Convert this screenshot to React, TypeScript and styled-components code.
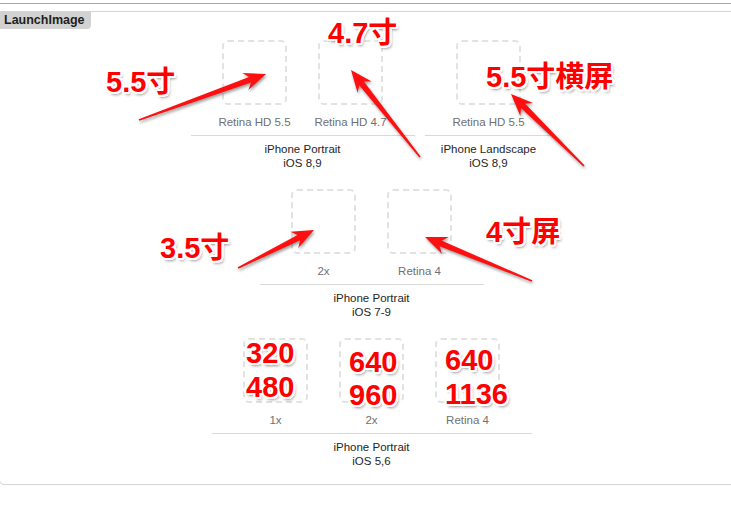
import React from 'react';
import styled, { createGlobalStyle } from 'styled-components';

const GlobalStyle = createGlobalStyle`
  html, body {
    margin: 0;
    padding: 0;
    background: #ffffff;
    overflow: hidden;
  }
  body {
    font-family: "Liberation Sans", Arial, sans-serif;
  }
`;

const Page = styled.div`
  position: relative;
  width: 731px;
  height: 513px;
  overflow: hidden;
`;

const TopRule = styled.div`
  height: 3px;
  border-bottom: 1px solid #a7a7a7;
  margin-bottom: 7px;
`;

const Panel = styled.section`
  box-sizing: border-box;
  width: 745px;
  margin-left: -1px;
  border: 1px solid #d5d5d5;
  border-radius: 0 0 5px 5px;
  display: flex;
  flex-direction: column;
  align-items: flex-start;
  padding-bottom: 16px;
`;

const Tag = styled.div`
  height: 17px;
  line-height: 17px;
  padding: 0 6px 0 4px;
  background: #d2d2d2;
  border-radius: 0 0 4px 0;
  font-size: 12.5px;
  font-weight: 700;
  color: #1e1e1e;
`;

const Rows = styled.div`
  align-self: stretch;
  margin-top: 11px;
  display: flex;
  flex-direction: column;
  gap: 19px;
`;

const Row = styled.div`
  display: flex;
  justify-content: center;
  gap: 10px;
`;

const Group = styled.div<{ $count: number }>`
  width: ${(p) => p.$count * 96 + 32}px;
  display: flex;
  flex-direction: column;
`;

const Cells = styled.div`
  display: flex;
  padding: 0 16px;
`;

const Cell = styled.div`
  width: 96px;
  display: flex;
  flex-direction: column;
  align-items: center;
`;

const Slot = styled.div`
  box-sizing: border-box;
  width: 65px;
  height: 65px;
  border: 2px dashed #e2e2e2;
  border-radius: 6px;
`;

const SlotLabel = styled.div`
  margin-top: 10px;
  font-size: 11.5px;
  line-height: 14px;
  color: #707070;
  white-space: nowrap;
`;

const Rule = styled.div`
  margin-top: 6px;
  height: 1px;
  background: #d9d9d9;
`;

const Title = styled.div`
  padding-top: 6px;
  text-align: center;
  font-size: 11.5px;
  line-height: 14px;
  color: #262626;
`;

const Annot = styled.div<{ $lh?: number }>`
  position: absolute;
  font-family: "Liberation Sans", "Noto Sans CJK SC", Arial, sans-serif;
  font-weight: 700;
  font-size: 29px;
  line-height: ${(p) => p.$lh ?? 29}px;
  color: #ff0000;
  white-space: nowrap;
  text-shadow:
    2px 0 0 #fff, -2px 0 0 #fff, 0 2px 0 #fff, 0 -2px 0 #fff,
    1.5px 1.5px 0 #fff, -1.5px 1.5px 0 #fff, 1.5px -1.5px 0 #fff, -1.5px -1.5px 0 #fff,
    1px 2px 0 #fff, -1px 2px 0 #fff, 1px -2px 0 #fff, -1px -2px 0 #fff,
    2px 1px 0 #fff, -2px 1px 0 #fff, 2px -1px 0 #fff, -2px -1px 0 #fff,
    0 0 3px rgba(0, 0, 0, 0.35),
    2px 3px 3px rgba(0, 0, 0, 0.4);
`;

const ArrowLayer = styled.svg`
  position: absolute;
  left: 0;
  top: 0;
  pointer-events: none;
  filter: drop-shadow(1px 2px 1.5px rgba(0, 0, 0, 0.4));
`;

type GroupData = { labels: string[]; title: string[] };

const rows: GroupData[][] = [
  [
    { labels: ['Retina HD 5.5', 'Retina HD 4.7'], title: ['iPhone Portrait', 'iOS 8,9'] },
    { labels: ['Retina HD 5.5'], title: ['iPhone Landscape', 'iOS 8,9'] },
  ],
  [{ labels: ['2x', 'Retina 4'], title: ['iPhone Portrait', 'iOS 7-9'] }],
  [{ labels: ['1x', '2x', 'Retina 4'], title: ['iPhone Portrait', 'iOS 5,6'] }],
];

type Note = { lines: string[]; x: number; y: number; lh?: number };

const notes: Note[] = [
  { lines: ['5.5寸'], x: 106, y: 68 },
  { lines: ['4.7寸'], x: 328, y: 19 },
  { lines: ['5.5寸横屏'], x: 486, y: 63 },
  { lines: ['3.5寸'], x: 160, y: 234 },
  { lines: ['4寸屏'], x: 486, y: 218 },
  { lines: ['320', '480'], x: 246, y: 336, lh: 34 },
  { lines: ['640', '960'], x: 349, y: 346, lh: 33 },
  { lines: ['640', '1136'], x: 445, y: 343, lh: 34 },
];

type Arrow = { tail: [number, number]; tip: [number, number] };

const arrows: Arrow[] = [
  { tail: [139, 120], tip: [266, 74] },
  { tail: [420, 157], tip: [351, 70] },
  { tail: [584, 166], tip: [511, 94] },
  { tail: [238, 268], tip: [314, 230] },
  { tail: [532, 281], tip: [425, 237] },
];

function arrowPoints({ tail, tip }: Arrow): string {
  const [tx, ty] = tail;
  const [px, py] = tip;
  const dx = px - tx;
  const dy = py - ty;
  const len = Math.hypot(dx, dy);
  const ux = dx / len;
  const uy = dy / len;
  const nx = -uy;
  const ny = ux;
  const headLen = 22;
  const headHalf = 9;
  const neckBack = 17;
  const neckHalf = 3;
  const tailHalf = 0.8;
  const pt = (bx: number, by: number, along: number, side: number) =>
    `${(bx + ux * along + nx * side).toFixed(1)},${(by + uy * along + ny * side).toFixed(1)}`;
  return [
    pt(tx, ty, 0, tailHalf),
    pt(px, py, -neckBack, neckHalf),
    pt(px, py, -headLen, headHalf),
    pt(px, py, 0, 0),
    pt(px, py, -headLen, -headHalf),
    pt(px, py, -neckBack, -neckHalf),
    pt(tx, ty, 0, -tailHalf),
  ].join(' ');
}

export default function App() {
  return (
    <Page>
      <GlobalStyle />
      <TopRule />
      <Panel>
        <Tag>LaunchImage</Tag>
        <Rows>
          {rows.map((row, ri) => (
            <Row key={ri}>
              {row.map((g, gi) => (
                <Group key={gi} $count={g.labels.length}>
                  <Cells>
                    {g.labels.map((l, li) => (
                      <Cell key={li}>
                        <Slot />
                        <SlotLabel>{l}</SlotLabel>
                      </Cell>
                    ))}
                  </Cells>
                  <Rule />
                  <Title>
                    {g.title[0]}
                    <br />
                    {g.title[1]}
                  </Title>
                </Group>
              ))}
            </Row>
          ))}
        </Rows>
      </Panel>
      <ArrowLayer width={731} height={513} viewBox="0 0 731 513">
        {arrows.map((a, i) => (
          <polygon key={i} points={arrowPoints(a)} fill="#ff0f0f" />
        ))}
      </ArrowLayer>
      {notes.map((n, i) => (
        <Annot key={i} $lh={n.lh} style={{ left: n.x, top: n.y }}>
          {n.lines.map((line, li) => (
            <div key={li}>{line}</div>
          ))}
        </Annot>
      ))}
    </Page>
  );
}
